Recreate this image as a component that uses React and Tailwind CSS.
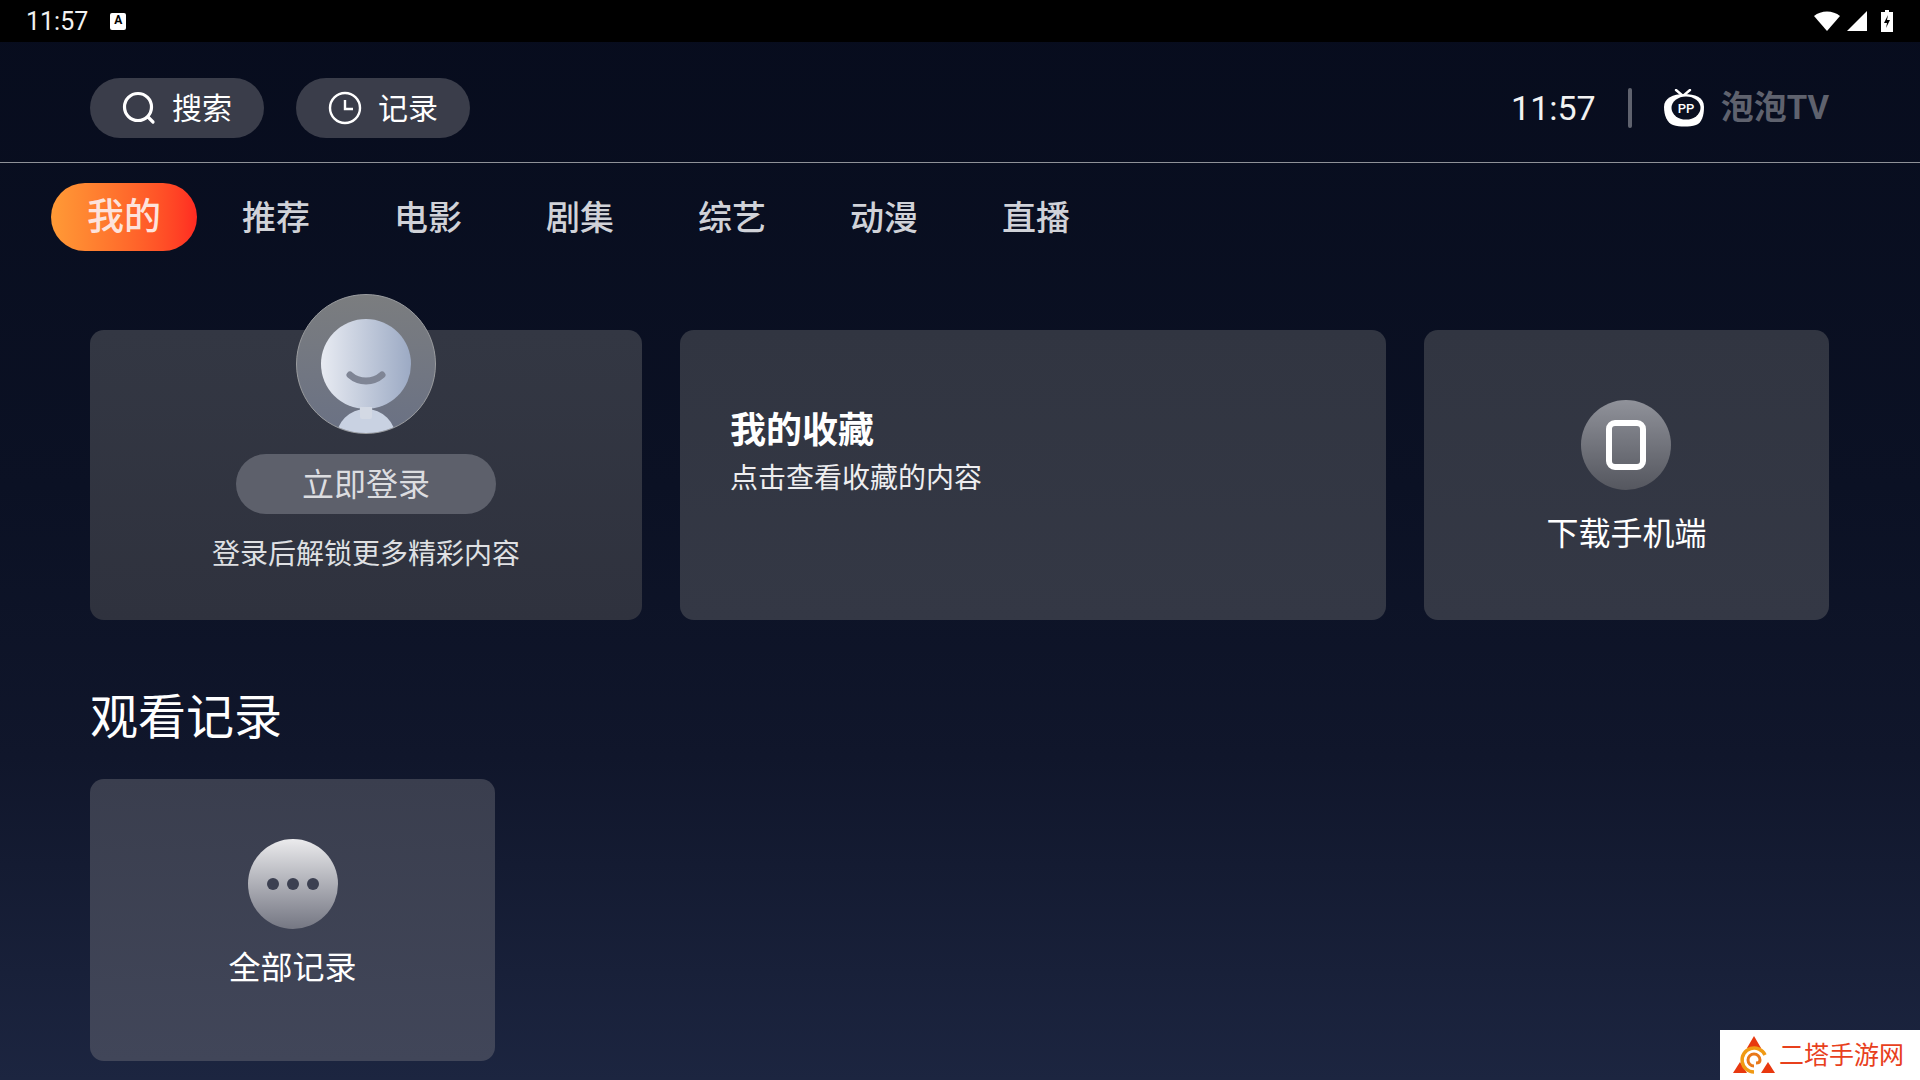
import React from "react";

const tabs = ["推荐", "电影", "剧集", "综艺", "动漫", "直播"];

const fontStack = "font-['Roboto','Noto_Sans_CJK_SC',sans-serif]";

const AppLogo = () => (
  <svg width="40" height="38" viewBox="0 0 40 38">
    <path d="M12 1l7 6 7-6" fill="none" stroke="#fff" strokeWidth="2.4" strokeLinecap="round" />
    <path d="M20 5c11 0 20 3 20 13 0 8-2 16-8 18-7 2-16 2-23 0C3 34 0 26 0 18 0 9 9 5 20 5z" fill="#fff" />
    <ellipse cx="22" cy="19" rx="14.5" ry="11.5" fill="#0a0f20" />
    <text x="22" y="24" textAnchor="middle" fontSize="13" fontWeight="500" fill="#fff" fontFamily="Roboto">PP</text>
  </svg>
);

const WatermarkLogo = () => (
  <svg width="42" height="38" viewBox="0 0 42 38">
    <path d="M21 0l7 12H14z" fill="#e8380f" />
    <path d="M7 26l7 11H0z" fill="#e8380f" />
    <path d="M35 26l7 11H28z" fill="#e8380f" />
    <path d="M21 36a12 12 0 1 1 11-17" fill="none" stroke="#f09a14" strokeWidth="3.5" />
    <path d="M21 30a6 6 0 1 1 6-6c0 2-2 3-4 3" fill="none" stroke="#e8781a" strokeWidth="3" />
  </svg>
);

const App = () => {
  return (
    <div className={`relative flex h-[1080px] w-[1920px] flex-col overflow-hidden bg-[linear-gradient(180deg,#070c1d_0%,#0b1124_45%,#10162b_70%,#1c2540_100%)] text-white ${fontStack}`}>
      {/* Status bar */}
      <div className="flex h-[42px] items-center justify-between bg-black pl-[26px] pr-[27px]">
        <div className="flex items-center gap-[22px]">
          <span className="text-[25px] leading-none text-[#f2f2f2]">11:57</span>
          <div className="flex h-[17px] w-[16px] items-start justify-center rounded-[2px] bg-white text-[12px] font-bold leading-[14px] text-black">A</div>
        </div>
        <div className="flex items-center gap-[7px]">
          <svg width="26" height="20" viewBox="0 0 26 20"><path d="M0 5C7-1 19-1 26 5L13 20z" fill="#fff" /></svg>
          <svg width="20" height="20" viewBox="0 0 20 20" className="mr-[7px]"><path d="M20 0v20H0z" fill="#fff" /></svg>
          <svg width="12" height="22" viewBox="0 0 12 22"><path fillRule="evenodd" d="M4 0h4v2h4v20H0V2h4zM7 5L3 13h3l-1 5 4-8H6z" fill="#fff" /></svg>
        </div>
      </div>

      {/* Header */}
      <div className="flex h-[121px] items-start justify-between border-b border-[#8f9198] pl-[90px] pr-[91px] pt-[36px]">
        <div className="flex gap-[32px]">
          <button className="flex h-[60px] w-[174px] items-center justify-center gap-[16px] rounded-full bg-[#3a3d4a] text-[30px]">
            <svg width="34" height="34" viewBox="0 0 34 34" fill="none" stroke="#fff" strokeWidth="3.2" strokeLinecap="round">
              <circle cx="16" cy="16" r="13.5" />
              <path d="M26 26l5 5" />
            </svg>
            <span>搜索</span>
          </button>
          <button className="flex h-[60px] w-[174px] items-center justify-center gap-[16px] rounded-full bg-[#3a3d4a] text-[30px]">
            <svg width="34" height="34" viewBox="0 0 34 34" fill="none" stroke="#fff" strokeWidth="2.4">
              <circle cx="17" cy="17" r="15" />
              <path d="M17 9v9h8" />
            </svg>
            <span>记录</span>
          </button>
        </div>
        <div className="flex h-[60px] items-center">
          <span className="text-[34px] font-normal text-[#f2f2f2]">11:57</span>
          <div className="ml-[32px] mr-[32px] h-[40px] w-[4px] rounded-full bg-[#5f626e]" />
          <AppLogo />
          <span className="ml-[17px] text-[33px] font-bold text-[#5f626e]">泡泡TV</span>
        </div>
      </div>

      {/* Tabs */}
      <div className="mt-[20px] flex items-center gap-[6px] pl-[51px]">
        <div className="flex h-[68px] w-[146px] items-center justify-center rounded-full bg-gradient-to-r from-[#ff9a36] to-[#ff2a22] pt-[2px] text-[37px] font-medium text-[#fde3dc]">我的</div>
        {tabs.map((tab) => (
          <div key={tab} className="flex h-[68px] w-[146px] items-center justify-center pt-[2px] text-[34px] font-medium text-[#d0d2d8]">{tab}</div>
        ))}
      </div>

      {/* Cards */}
      <div className="mt-[79px] flex gap-[38px] pl-[90px]">
        <div className="relative flex h-[290px] w-[552px] flex-col items-center rounded-[14px] bg-gradient-to-b from-[#333743] to-[#2f323e]">
          <div className="absolute top-[-36px] h-[140px] w-[140px] overflow-hidden rounded-full border border-[#9a9c9f] bg-gradient-to-b from-[#7b7d7f] to-[#6a7184]">
            <div className="absolute left-[24px] top-[24px] flex h-[90px] w-[90px] items-center justify-center rounded-full bg-gradient-to-r from-[#e8ebf2] to-[#9caac4]">
              <svg width="40" height="16" viewBox="0 0 40 16" className="mt-[30px]">
                <path d="M4 4c9 8 23 8 32 0" fill="none" stroke="#7f8595" strokeWidth="7" strokeLinecap="round" />
              </svg>
            </div>
            <div className="absolute left-[39px] top-[114px] h-[40px] w-[60px] rounded-t-full bg-[#c9d2e2]" />
            <div className="absolute left-[63px] top-[112px] h-[12px] w-[12px] rounded-b-[2px] bg-[#d3d9e4]" />
          </div>
          <button className="mt-[124px] flex h-[60px] w-[260px] items-center justify-center rounded-full bg-[#5d606b] pt-[2px] text-[32px] text-[#dcdde0]">立即登录</button>
          <p className="mt-[21px] text-[28px] leading-[40px] text-[#dfe0e3]">登录后解锁更多精彩内容</p>
        </div>

        <div className="flex h-[290px] w-[706px] flex-col rounded-[14px] bg-gradient-to-b from-[#313541] to-[#343845] pl-[50px] pt-[74px]">
          <h3 className="text-[36px] font-bold leading-[54px]">我的收藏</h3>
          <p className="mt-[1px] text-[28px] leading-[40px] text-[#eeeef0]">点击查看收藏的内容</p>
        </div>

        <div className="flex h-[290px] w-[405px] flex-col items-center rounded-[14px] bg-gradient-to-b from-[#313541] to-[#343845] pt-[70px]">
          <div className="mr-[2px] flex h-[90px] w-[90px] items-center justify-center rounded-full bg-gradient-to-b from-[#90929a] to-[#55575f]">
            <div className="h-[50px] w-[40px] rounded-[9px] border-[6px] border-white" />
          </div>
          <p className="mt-[21px] text-[32px] leading-[46px]">下载手机端</p>
        </div>
      </div>

      {/* Watch history */}
      <h2 className="ml-[90px] mt-[64px] text-[48px] leading-[68px]">观看记录</h2>
      <div className="ml-[90px] mt-[27px] flex h-[282px] w-[405px] flex-col items-center rounded-[14px] bg-gradient-to-b from-[#3a3e4e] to-[#414659] pt-[60px]">
        <div className="flex h-[90px] w-[90px] items-center justify-center gap-[8px] rounded-full bg-gradient-to-b from-[#ebebed] to-[#757783]">
          <span className="h-[12px] w-[12px] rounded-full bg-[#3c4051]" />
          <span className="h-[12px] w-[12px] rounded-full bg-[#3c4051]" />
          <span className="h-[12px] w-[12px] rounded-full bg-[#3c4051]" />
        </div>
        <p className="mt-[16px] text-[32px] leading-[46px]">全部记录</p>
      </div>

      {/* Watermark */}
      <div className="absolute bottom-0 right-0 flex h-[50px] w-[200px] items-center gap-[4px] bg-white pl-[13px]">
        <WatermarkLogo />
        <span className="text-[25px] leading-none text-[#e8401c]">二塔手游网</span>
      </div>
    </div>
  );
};

export default App;
